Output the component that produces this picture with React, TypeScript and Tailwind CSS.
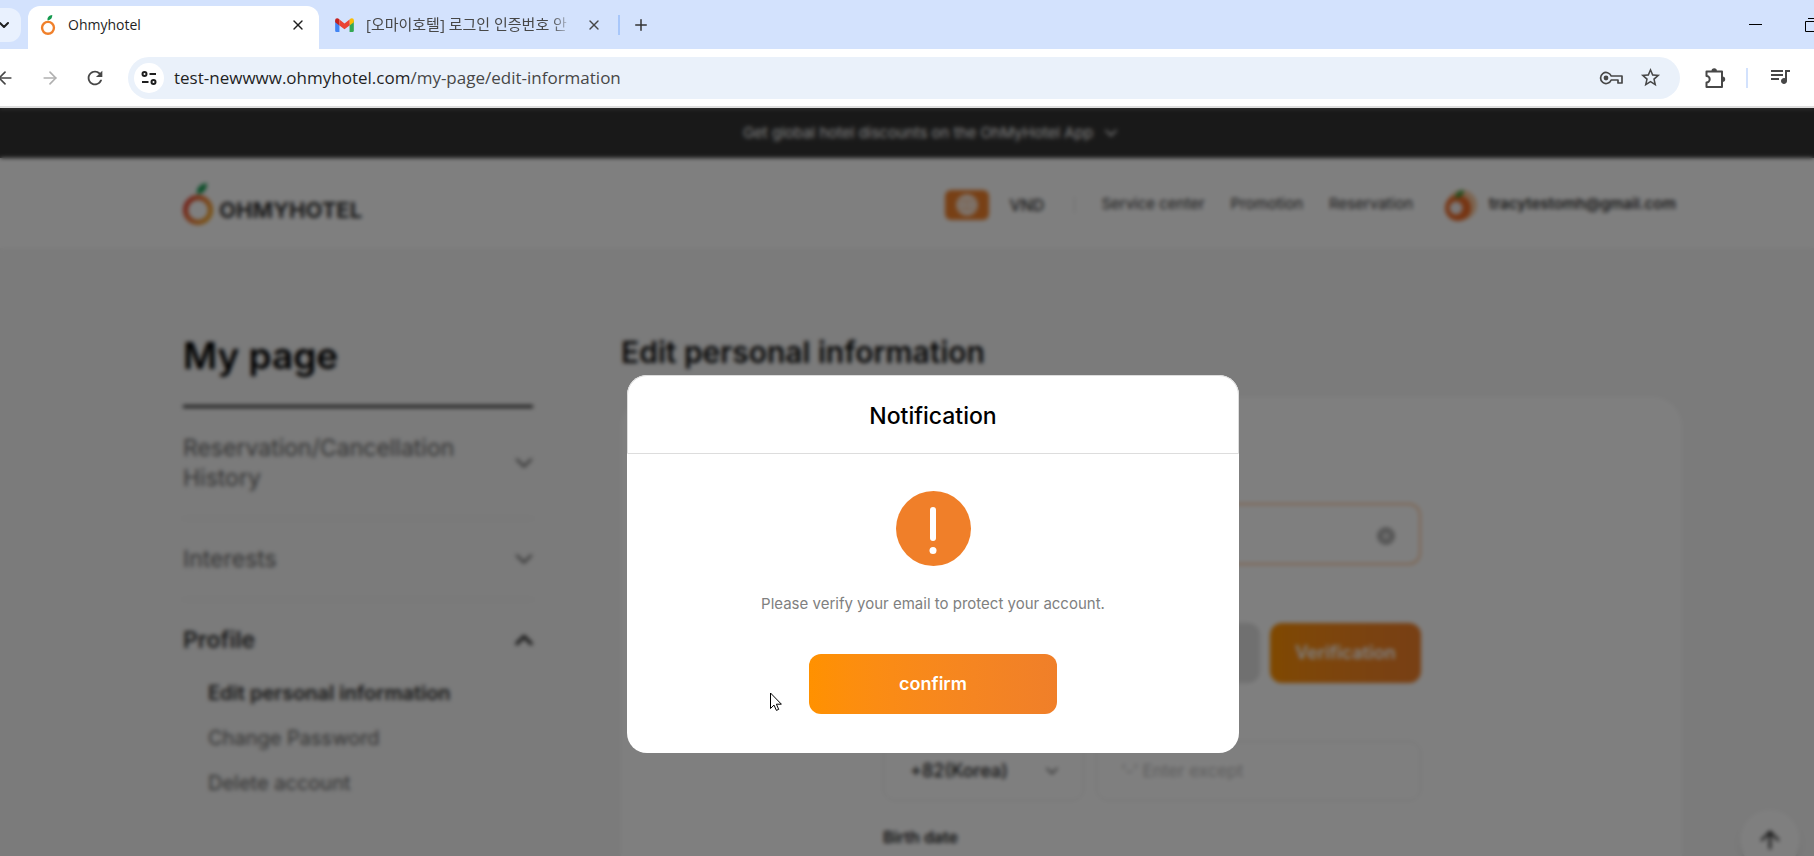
import { useState } from "react";
import type { ReactNode } from "react";
import { ArrowLeft, ArrowRight, ArrowUp, ChevronDown, ChevronUp, Globe, Plus, X } from "lucide-react";
import { MdOutlineQueueMusic, MdOutlineStarBorder, MdRefresh } from "react-icons/md";

const NAV_LINKS = ["Service center", "Promotion", "Reservation"];

const PROFILE_LINKS = ["Edit personal information", "Change Password", "Delete account"];

function OrangeLogo({ className, flat = false }: { className?: string; flat?: boolean }) {
  return (
    <svg viewBox="0 0 30 42" fill="none" className={className} aria-hidden="true">
      <defs>
        <linearGradient id="peel" x1="0" y1="14" x2="30" y2="30" gradientUnits="userSpaceOnUse">
          <stop offset="0" stopColor="#e0282e" />
          <stop offset="0.55" stopColor="#f0762b" />
          <stop offset="1" stopColor="#f5a623" />
        </linearGradient>
      </defs>
      <circle cx="15" cy="27" r="12.500" stroke={flat ? "#f0802b" : "url(#peel)"} strokeWidth="5" />
      <path d="M14 11C13 5 17 1 24 0c0 6-3 11-10 11Z" fill="#149a4f" />
    </svg>
  );
}

function AvatarLogo() {
  return (
    <svg viewBox="0 0 32 32" className="size-8" aria-hidden="true">
      <circle cx="17" cy="16" r="15" fill="#f9c9a0" />
      <circle cx="13" cy="19" r="13" fill="#ee6a25" />
      <circle cx="11" cy="19" r="6.500" fill="#f6f0f0" />
      <path d="M10 9c0-5 4-8 9-8 0 5-4 8-9 8Z" fill="#3f9a3c" />
    </svg>
  );
}

function GmailLogo() {
  return (
    <svg viewBox="0 0 24 18" className="h-[14px] w-[19px] shrink-0" aria-hidden="true">
      <path d="M0 3v13.400A1.600 1.600 0 0 0 1.600 18H5.500V7.500Z" fill="#4285f4" />
      <path d="M24 3v13.400a1.600 1.600 0 0 1-1.600 1.600H18.500V7.500Z" fill="#34a853" />
      <path d="M18.500 2C21-.6 24 .3 24 3.200V5.500l-5.500 4Z" fill="#fbbc04" />
      <path d="M5.500 2C3-.6 0 .3 0 3.200V5.500l5.500 4Z" fill="#c5221f" />
      <path d="M5.500 9.500V2l6.500 5 6.500-5v7.500L12 14.400Z" fill="#ea4335" />
    </svg>
  );
}

function TuneIcon() {
  return (
    <svg viewBox="0 0 16 16" className="size-4" fill="none" stroke="#1f1f1f" strokeWidth="2" aria-hidden="true">
      <circle cx="3.500" cy="4" r="2" />
      <path d="M8.500 4H15M1 12h6.500" />
      <circle cx="12.500" cy="12" r="2" />
    </svg>
  );
}

function KeyIcon() {
  return (
    <svg viewBox="0 0 24 14" className="h-[14px] w-6" fill="none" stroke="currentColor" strokeWidth="1.700" aria-hidden="true">
      <path d="M12.200 5H23v7h-4V9h-2v0h-4.800a5.500 5.500 0 1 1 0-4Z" strokeLinejoin="round" />
      <circle cx="7" cy="7" r="2.400" fill="currentColor" stroke="none" />
    </svg>
  );
}

function ExtensionsIcon() {
  return (
    <svg viewBox="0 0 22 22" className="size-[22px]" aria-hidden="true">
      <path
        d="M2.500 4.500h15.500v15.500H2.500v-4.500a3.200 3.200 0 0 0 0-6.400Z"
        fill="none"
        stroke="currentColor"
        strokeWidth="2"
        strokeLinejoin="round"
      />
      <path d="M7.500 4a2.700 2.700 0 0 1 5.400 0ZM18.500 9.500a2.700 2.700 0 0 1 0 5.400Z" fill="currentColor" />
    </svg>
  );
}

function BrowserBar() {
  return (
    <header className="shrink-0 border-b-2 border-[#dedede] bg-white font-['Open_Sans','Noto_Sans_CJK_KR',sans-serif] text-[#1f1f1f]">
      <div className="flex h-[49px] items-center bg-[#d3e2fd]">
        <button aria-label="Search tabs" className="flex h-[34px] w-[21px] items-center rounded-r-xl bg-[#e9f1fe]">
          <ChevronDown className="-ml-1 size-4" strokeWidth={3} />
        </button>
        <div className="ml-[7px] flex h-[43px] w-[291px] items-center self-end rounded-t-xl bg-white pb-[6px] pl-3 pr-[13px]">
          <OrangeLogo flat className="h-5 w-4" />
          <span className="ml-3 flex-1 text-sm">Ohmyhotel</span>
          <button aria-label="Close tab">
            <X className="size-4" strokeWidth={2} />
          </button>
        </div>
        <div className="flex h-[34px] w-[299px] items-center pl-4 pr-4 text-[#474747]">
          <GmailLogo />
          <span className="ml-3 w-[209px] whitespace-nowrap text-[15px] [mask-image:linear-gradient(to_right,black_90%,transparent)]">
            [오마이호텔] 로그인 인증번호 안
          </span>
          <button aria-label="Close tab" className="ml-[14px]">
            <X className="size-4" strokeWidth={2} />
          </button>
        </div>
        <div className="h-5 w-[2px] bg-[#a8c7fa]" />
        <button aria-label="New tab" className="ml-3 text-[#333]">
          <Plus className="size-[18px]" strokeWidth={2} />
        </button>
        <div className="flex-1" />
        <button aria-label="Minimize" className="h-px w-[13px] bg-black" />
        <button aria-label="Restore" className="ml-[43px] w-[9px] overflow-hidden">
          <svg viewBox="0 0 14 14" className="size-[14px]" fill="none" stroke="#000" aria-hidden="true">
            <path d="M.5 3.500h10v10H.5ZM3 .5h10.500V11" />
          </svg>
        </button>
      </div>

      <div className="flex h-[57px] items-center text-[#474747]">
        <button aria-label="Back" className="-ml-[5px]">
          <ArrowLeft className="size-5" />
        </button>
        <button aria-label="Forward" className="ml-[25px] text-[#b0b0b0]">
          <ArrowRight className="size-5" />
        </button>
        <button aria-label="Reload" className="ml-6">
          <MdRefresh className="size-[22px]" />
        </button>
        <div className="ml-[22px] flex h-[42px] flex-1 items-center rounded-full bg-[#eaf1fa] pl-[6px] pr-[18px]">
          <button aria-label="View site information" className="flex size-[30px] items-center justify-center rounded-full bg-white">
            <TuneIcon />
          </button>
          <p className="ml-[10px] flex-1 pt-px text-[17px]">
            <span className="text-[#1f1f1f]">test-newwww.ohmyhotel.com</span>
            /my-page/edit-information
          </p>
          <button aria-label="Passwords">
            <KeyIcon />
          </button>
          <button aria-label="Bookmark" className="ml-4">
            <MdOutlineStarBorder className="size-[23px]" />
          </button>
        </div>
        <button aria-label="Extensions" className="ml-6">
          <ExtensionsIcon />
        </button>
        <div className="ml-5 h-5 w-[2px] bg-[#d3e2fd]" />
        <button aria-label="Media" className="mb-[3px] ml-5 mr-[22px]">
          <MdOutlineQueueMusic className="size-6" />
        </button>
      </div>
    </header>
  );
}

function SiteHeader() {
  return (
    <>
      <button className="flex h-[50px] w-full items-center justify-center gap-2 bg-[#333] pl-[50px] text-[15px] text-white">
        Get global hotel discounts on the OhMyHotel App
        <ChevronDown className="size-5" />
      </button>
      <div className="flex h-[90px] items-center bg-white pl-[183px] pr-[138px] pt-[3px] text-[15px] text-[#333]">
        <a href="#" className="flex items-end gap-[6px] pb-[2px] text-[22px] font-bold leading-[30px]">
          <OrangeLogo className="h-[42px] w-[30px]" />
          OHMYHOTEL
        </a>
        <div className="flex-1" />
        <button aria-label="Language" className="flex h-[30px] w-11 items-center justify-center rounded-md bg-[#f0802b]">
          <Globe className="size-[22px] rounded-full bg-white/60 text-white/70" />
        </button>
        <button className="ml-5 text-base font-medium">VND</button>
        <div className="ml-[30px] mr-[26px] h-4 w-px bg-[#ddd]" />
        <nav className="flex gap-[26px]">
          {NAV_LINKS.map((label) => (
            <a key={label} href="#">
              {label}
            </a>
          ))}
        </nav>
        <a href="#" className="ml-[32px] flex items-center gap-3 font-semibold">
          <AvatarLogo />
          tracytestomh@gmail.com
        </a>
      </div>
    </>
  );
}

function MenuGroup({ label, open = false, children }: { label: string; open?: boolean; children?: ReactNode }) {
  const Chevron = open ? ChevronUp : ChevronDown;
  return (
    <li className="border-b border-[#e8e8e8] last:border-0">
      <button
        aria-expanded={open}
        className={`flex w-full items-center justify-between pt-[25px] text-left text-[23px] leading-[30px] ${
          open ? "pb-[23px] font-semibold text-[#333]" : "pb-[25px] text-[#666]"
        }`}
      >
        <span className="max-w-[290px]">{label}</span>
        <Chevron className="-mr-[5px] size-7" strokeWidth={open ? 3 : 2} />
      </button>
      {children}
    </li>
  );
}

function Sidebar() {
  return (
    <aside className="w-[350px] shrink-0">
      <h1 className="border-b-[3px] border-[#333] pb-[26px] pt-px text-[37px] font-semibold leading-[46px] text-black">My page</h1>
      <ul>
        <MenuGroup label="Reservation/Cancellation History" />
        <MenuGroup label="Interests" />
        <MenuGroup label="Profile" open>
          <ul className="space-y-[15px] pl-[25px] text-xl leading-[30px] text-[#666]">
            {PROFILE_LINKS.map((label, i) => (
              <li key={label} className={i === 0 ? "font-semibold text-[#333]" : ""}>
                <a href="#">{label}</a>
              </li>
            ))}
          </ul>
        </MenuGroup>
      </ul>
    </aside>
  );
}

function InformationForm() {
  return (
    <main className="min-w-0 flex-1">
      <h2 className="text-[30px] font-semibold leading-[40px] text-[#111]">Edit personal information</h2>
      <form className="mt-[25px] h-[600px] rounded-[30px] bg-white pl-[262px] pr-[261px] pt-[106px] text-[17px]">
        <div className="flex h-[62px] items-center rounded-xl border-2 border-[#fbc9a0] pr-6">
          <input aria-label="Name" className="h-full min-w-0 flex-1 px-6 outline-none" />
          <button type="button" aria-label="Clear" className="mt-1 flex size-[18px] items-center justify-center rounded-full bg-[#aaa] text-white">
            <X className="size-3" strokeWidth={3} />
          </button>
        </div>
        <div className="mt-[58px] flex gap-[10px]">
          <input aria-label="Email" disabled className="h-[60px] min-w-0 flex-1 rounded-xl bg-[#e0e0e0]" />
          <button
            type="button"
            className="h-[60px] w-[151px] rounded-xl bg-linear-to-r from-[#ff9100] to-[#f07f29] text-lg font-semibold text-white"
          >
            Verification
          </button>
        </div>
        <div className="mt-[58px] flex gap-3">
          <div className="relative w-[201px]">
            <select
              aria-label="Country code"
              className="h-[60px] w-full appearance-none rounded-xl border border-[#e8e8e8] pl-[26px] text-lg font-medium text-[#222]"
            >
              <option>+82(Korea)</option>
            </select>
            <ChevronDown className="pointer-events-none absolute right-[22px] top-[20px] size-5 text-[#555]" />
          </div>
          <input
            aria-label="Phone number"
            placeholder="‘-’ Enter except"
            className="h-[60px] min-w-0 flex-1 rounded-xl border border-[#e8e8e8] px-6 placeholder:text-[#bbb]"
          />
        </div>
        <label htmlFor="birth" className="mt-6 block text-base font-semibold leading-6 text-[#222]">
          Birth date
        </label>
        <input id="birth" className="mt-3 h-[60px] w-full rounded-xl border border-[#e8e8e8]" />
      </form>
    </main>
  );
}

function NotificationDialog({ onConfirm }: { onConfirm: () => void }) {
  return (
    <div className="absolute inset-0 flex items-start justify-center bg-black/50 pl-[52px] pt-[267px] backdrop-blur-[2px]">
      <div role="dialog" aria-labelledby="dialog-title" className="relative w-[612px] rounded-[20px] bg-white text-center">
        <h2
          id="dialog-title"
          className="rounded-t-[20px] border border-[#ddd] pb-[21px] pt-[24px] text-[23px] font-medium leading-8 text-black"
        >
          Notification
        </h2>
        <div className="flex flex-col items-center pb-[39px] pt-[37px]">
          <svg viewBox="0 0 75 75" className="size-[75px]" aria-hidden="true">
            <circle cx="37.500" cy="37.500" r="37.500" fill="#f07f29" />
            <path d="M37 19v28" stroke="#fff" strokeWidth="6" strokeLinecap="round" />
            <circle cx="37" cy="59.500" r="3.500" fill="#fff" />
          </svg>
          <p className="mt-[26px] text-[15px] leading-6 text-[#808080]">Please verify your email to protect your account.</p>
          <button
            onClick={onConfirm}
            className="mt-[38px] h-[60px] w-[248px] rounded-xl bg-linear-to-r from-[#ff9100] to-[#f07f29] text-lg font-semibold text-white"
          >
            confirm
          </button>
        </div>
        {/* mouse pointer */}
        <svg viewBox="0 0 12 19" className="absolute left-[143px] top-[317px] h-[19px] w-3" fill="#fff" stroke="#000" aria-hidden="true">
          <path d="M.5 1v15.500l3.500-3.400 2.400 5.300 2.300-1-2.300-5.200h5Z" />
        </svg>
      </div>
    </div>
  );
}

export default function App() {
  const [showDialog, setShowDialog] = useState(true);

  return (
    <div className="flex h-screen flex-col overflow-hidden">
      <BrowserBar />
      <div className="relative min-h-0 flex-1 overflow-hidden bg-[#f6f6f6] font-['Inter','Noto_Sans_CJK_KR',sans-serif]">
        <SiteHeader />
        <div className="flex gap-[88px] pl-[183px] pr-[132px] pt-[84px]">
          <Sidebar />
          <InformationForm />
        </div>
        <button
          aria-label="Back to top"
          className="absolute -bottom-[14px] right-[14px] flex size-[60px] items-center justify-center rounded-full bg-white shadow-md"
        >
          <ArrowUp className="size-7 text-[#222]" strokeWidth={2} />
        </button>
        {showDialog && <NotificationDialog onConfirm={() => setShowDialog(false)} />}
      </div>
    </div>
  );
}
